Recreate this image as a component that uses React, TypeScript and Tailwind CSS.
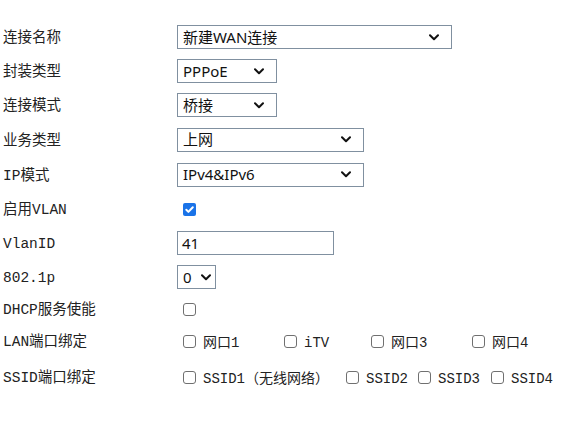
import React from "react";

const labelFont = { fontFamily: '"Liberation Mono", "Noto Sans CJK SC", monospace' };
const ctlFont = { fontFamily: '"Noto Sans", "Noto Sans CJK SC", sans-serif' };

function Chevron() {
  return (
    <svg width="10" height="7" viewBox="0 0 10 7" className="shrink-0">
      <path d="M1 1.2 L5 5.2 L9 1.2" fill="none" stroke="#111" strokeWidth="2" strokeLinecap="round" strokeLinejoin="round" />
    </svg>
  );
}

function Select({ value, w, pr = "pr-[12px]" }: { value: string; w: string; pr?: string }) {
  return (
    <div
      className={`${w} h-[24px] border border-[#8090a0] bg-white flex items-center justify-between pl-[5px] ${pr} text-[15px] text-[#111]`}
      style={ctlFont}
    >
      <span className="leading-none">{value}</span>
      <Chevron />
    </div>
  );
}

function Box({ checked = false }: { checked?: boolean }) {
  if (checked)
    return (
      <span className="w-[13px] h-[13px] rounded-[2px] bg-[#1a73e8] flex items-center justify-center shrink-0">
        <svg width="11" height="11" viewBox="0 0 11 11">
          <path d="M2.3 5.8 L4.4 7.9 L8.8 3.2" fill="none" stroke="#fff" strokeWidth="2" strokeLinecap="round" strokeLinejoin="round" />
        </svg>
      </span>
    );
  return <span className="block w-[13px] h-[13px] rounded-[3px] border border-[#707070] bg-white shrink-0" />;
}

function Check({ text, w }: { text: string; w: string }) {
  return (
    <div className={`${w} flex items-center shrink-0`}>
      <Box />
      <span className="ml-[7px] text-[14px] text-[#222] leading-none translate-y-[2px] whitespace-nowrap" style={labelFont}>
        {text}
      </span>
    </div>
  );
}

function Row({ label, h, children }: { label: string; h: string; children: React.ReactNode }) {
  return (
    <div className={`flex items-center ${h}`}>
      <div className="w-[174px] text-[14.5px] text-[#222] shrink-0 translate-y-[2px]" style={labelFont}>
        {label}
      </div>
      <div className="flex items-center">{children}</div>
    </div>
  );
}

export default function App() {
  return (
    <div className="w-[579px] h-[427px] bg-white pt-[20px] pl-[3px]">
      <Row label="连接名称" h="h-[34px]">
        <Select value="新建WAN连接" w="w-[275px]" />
      </Row>
      <Row label="封装类型" h="h-[34px]">
        <Select value="PPPoE" w="w-[100px]" />
      </Row>
      <Row label="连接模式" h="h-[34px]">
        <Select value="桥接" w="w-[100px]" />
      </Row>
      <Row label="业务类型" h="h-[35px]">
        <Select value="上网" w="w-[187px]" />
      </Row>
      <Row label="IP模式" h="h-[35px]">
        <Select value="IPv4&IPv6" w="w-[187px]" />
      </Row>
      <Row label="启用VLAN" h="h-[34px]">
        <div className="pl-[6px]">
          <Box checked />
        </div>
      </Row>
      <Row label="VlanID" h="h-[34px]">
        <div
          className="w-[157px] h-[24px] border border-[#8090a0] bg-white flex items-center pl-[4px] text-[15px] text-[#111]"
          style={ctlFont}
        >
          41
        </div>
      </Row>
      <Row label="802.1p" h="h-[34px]">
        <Select value="0" w="w-[39px]" pr="pr-[4px]" />
      </Row>
      <Row label="DHCP服务使能" h="h-[30px]">
        <div className="pl-[6px]">
          <Box />
        </div>
      </Row>
      <Row label="LAN端口绑定" h="h-[34px]">
        <div className="flex items-center pl-[6px]">
          <Check text="网口1" w="w-[101px]" />
          <Check text="iTV" w="w-[87px]" />
          <Check text="网口3" w="w-[101px]" />
          <Check text="网口4" w="w-[80px]" />
        </div>
      </Row>
      <Row label="SSID端口绑定" h="h-[38px]">
        <div className="flex items-center pl-[6px]">
          <Check text="SSID1（无线网络）" w="w-[163px]" />
          <Check text="SSID2" w="w-[72px]" />
          <Check text="SSID3" w="w-[73px]" />
          <Check text="SSID4" w="w-[70px]" />
        </div>
      </Row>
    </div>
  );
}
